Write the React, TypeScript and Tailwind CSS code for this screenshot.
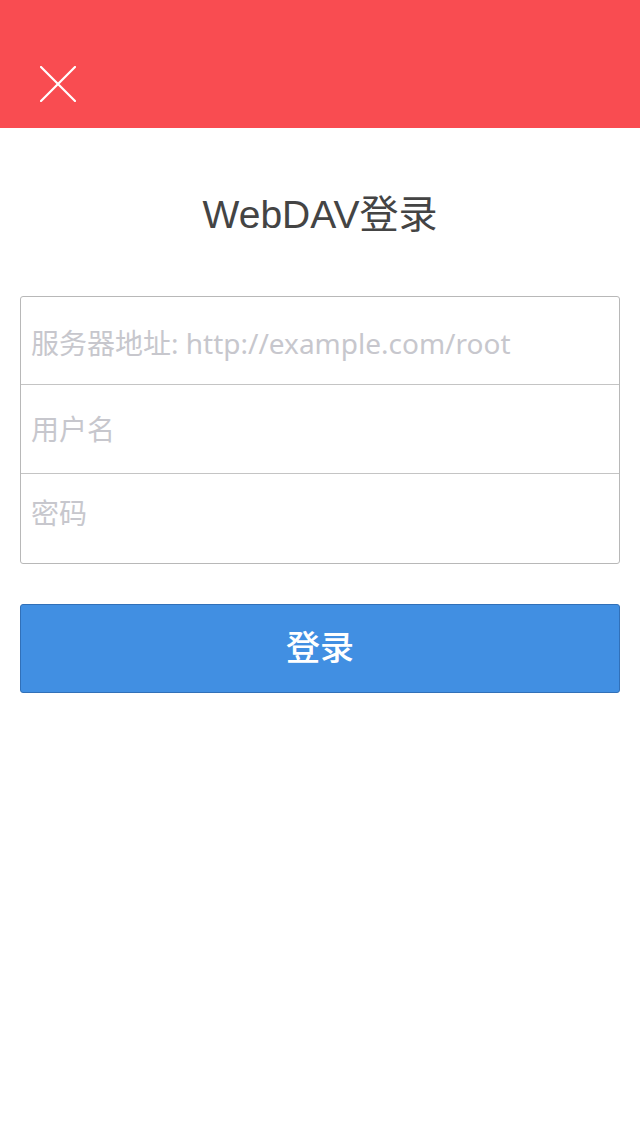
import { useState } from "react";

const latin = "font-['Liberation_Sans','Noto_Sans_CJK_SC',sans-serif]";
const field =
  "h-full w-full bg-transparent px-[10px] font-['Noto_Sans','Noto_Sans_CJK_SC',sans-serif] text-[28px] text-[#333] outline-none placeholder:text-[#c7c7cd]";

function CloseIcon() {
  return (
    <svg width="36" height="36" viewBox="0 0 36 36" className="block">
      <path d="M1 1 L35 35 M35 1 L1 35" stroke="#ffffff" strokeWidth="2.2" strokeLinecap="square" />
    </svg>
  );
}

export default function App() {
  const [server, setServer] = useState("");
  const [user, setUser] = useState("");
  const [pass, setPass] = useState("");

  return (
    <div className={`min-h-[1136px] w-[640px] bg-white ${latin}`}>
      {/* Header */}
      <div className="flex h-[128px] items-end bg-[#f94c51] pb-[26px] pl-[40px]">
        <button type="button" className="block">
          <CloseIcon />
        </button>
      </div>

      {/* Title */}
      <h1 className="mt-[57px] text-center text-[39px] leading-[60px] text-[#444444]">WebDAV登录</h1>

      {/* Form */}
      <div className="mx-[20px] mt-[51px] overflow-hidden rounded-[3px] border border-[#b8b8b8]">
        <div className="h-[88px] border-b border-[#c4c4c4] pt-[5px]">
          <input
            value={server}
            onChange={(e) => setServer(e.target.value)}
            placeholder="服务器地址: http://example.com/root"
            className={field}
          />
        </div>
        <div className="h-[89px] border-b border-[#c4c4c4]">
          <input value={user} onChange={(e) => setUser(e.target.value)} placeholder="用户名" className={field} />
        </div>
        <div className="h-[89px] pb-[11px]">
          <input
            type="password"
            value={pass}
            onChange={(e) => setPass(e.target.value)}
            placeholder="密码"
            className={field}
          />
        </div>
      </div>

      {/* Submit */}
      <button
        type="button"
        className="mx-[20px] mt-[40px] flex h-[89px] w-[600px] items-center justify-center rounded-[3px] border border-[#3170b8] bg-[#418fe2] text-[34px] font-medium text-white"
      >
        登录
      </button>
    </div>
  );
}
